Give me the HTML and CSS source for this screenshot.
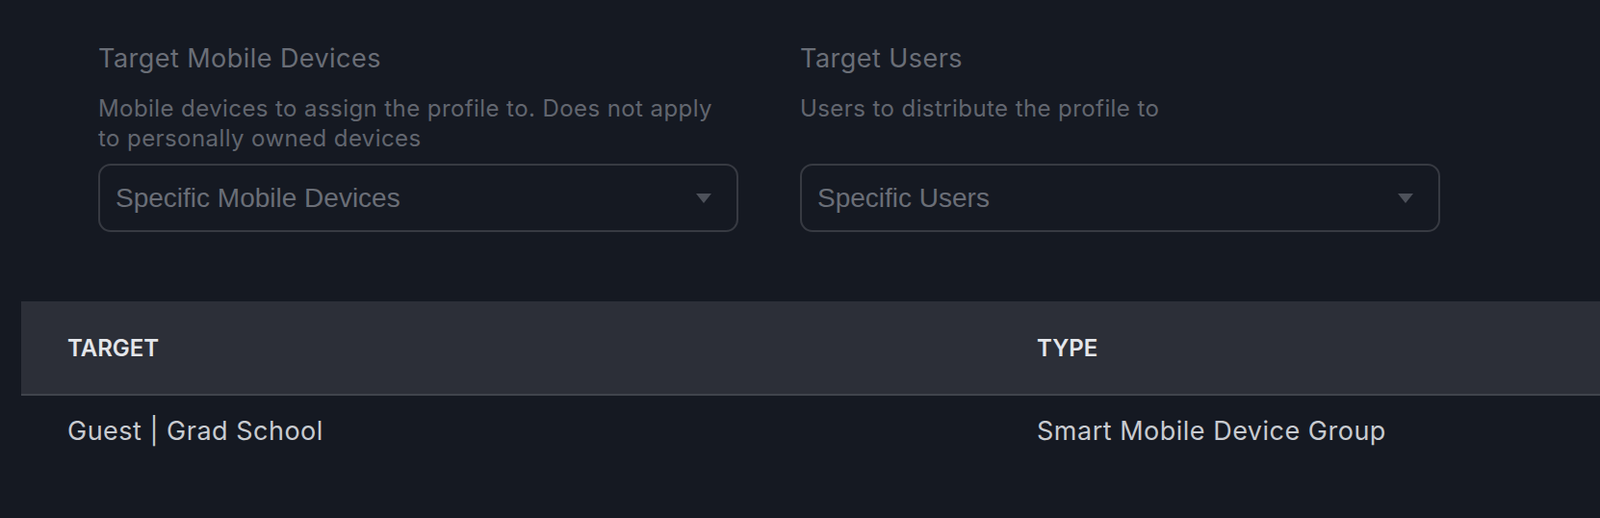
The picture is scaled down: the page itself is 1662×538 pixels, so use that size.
FILE: index.html
```html
<!DOCTYPE html>
<html>
<head>
<meta charset="utf-8">
<link rel="stylesheet" href="styles.css">
</head>
<body>
<div class="page">
  <div class="fields">
    <div class="field">
      <div class="label">Target Mobile Devices</div>
      <div class="desc">Mobile devices to assign the profile to. Does not apply to personally owned devices</div>
      <div class="select">
        <span class="select-text">Specific Mobile Devices</span>
        <span class="caret"></span>
      </div>
    </div>
    <div class="field">
      <div class="label">Target Users</div>
      <div class="desc">Users to distribute the profile to</div>
      <div class="select">
        <span class="select-text">Specific Users</span>
        <span class="caret"></span>
      </div>
    </div>
  </div>
  <div class="table">
    <div class="thead">
      <div class="cell col1">TARGET</div>
      <div class="cell col2">TYPE</div>
    </div>
    <div class="trow">
      <div class="cell col1">Guest | Grad School</div>
      <div class="cell col2">Smart Mobile Device Group</div>
    </div>
  </div>
</div>
</body>
</html>
```
FILE: styles.css
```css
html, body {
  margin: 0;
  padding: 0;
  background: #151922;
  overflow: hidden;
}
.page {
  width: 1662px;
  height: 538px;
  font-family: Inter, "Noto Sans", sans-serif;
}
.fields {
  display: flex;
  gap: 64px;
  padding: 43px 0 0 102px;
}
.field {
  width: 665px;
  display: flex;
  flex-direction: column;
}
.label {
  font-size: 27px;
  line-height: 36px;
  letter-spacing: 0.45px;
  color: #6a6e77;
  height: 54px;
}
.desc {
  font-size: 24px;
  line-height: 31px;
  letter-spacing: 0.42px;
  color: #62666f;
  height: 62px;
}
.select {
  margin-top: 11px;
  height: 71px;
  box-sizing: border-box;
  border: 2px solid #373a42;
  border-radius: 13px;
  display: flex;
  align-items: center;
  justify-content: space-between;
  padding: 0 26px 0 16px;
}
.select-text {
  font-family: "Liberation Sans", Arial, sans-serif;
  font-size: 28px;
  color: #6a6e77;
}
.caret {
  width: 0;
  height: 0;
  border-left: 8px solid transparent;
  border-right: 8px solid transparent;
  border-top: 10px solid #4d515a;
}
.table {
  margin-top: 72px;
  margin-left: 22px;
}
.thead {
  display: flex;
  height: 96px;
  align-items: center;
  background: #2c2f38;
  border-bottom: 2px solid #40444c;
}
.cell {
  padding-left: 48px;
  box-sizing: border-box;
}
.col1 {
  width: 1007px;
}
.col2 {
  flex: 1;
}
.thead .cell {
  font-size: 24px;
  font-weight: 600;
  color: #e4e6ea;
}
.trow {
  display: flex;
  height: 72px;
  align-items: center;
}
.trow .cell {
  font-size: 27px;
  letter-spacing: 0.5px;
  color: #c8cbd0;
}
```
